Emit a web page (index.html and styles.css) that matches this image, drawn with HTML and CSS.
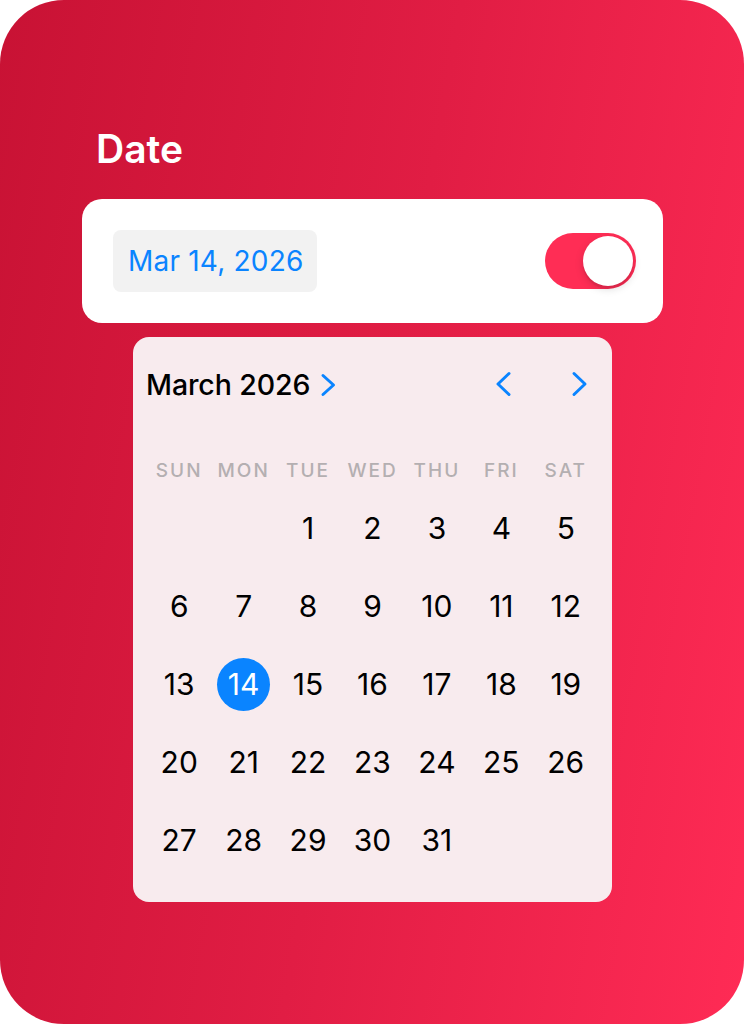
FILE: index.html
```html
<!DOCTYPE html>
<html lang="en">
<head>
<meta charset="utf-8">
<title>Date</title>
<link rel="stylesheet" href="styles.css">
</head>
<body>
<div class="frame">
  <h1 class="title">Date</h1>
  <div class="field">
    <div class="datebox">Mar 14, 2026</div>
    <div class="toggle"><div class="knob"></div></div>
  </div>
  <div class="calendar">
    <div class="cal-head">
      <div class="month">March 2026
        <svg class="chev-month" width="17" height="24" viewBox="0 0 17 24"><path d="M3 2.5 L13.5 12 L3 21.5" fill="none" stroke="#0a84ff" stroke-width="3" stroke-linecap="round" stroke-linejoin="round"/></svg>
      </div>
      <div class="nav">
        <svg class="chev" width="17" height="26" viewBox="0 0 17 26"><path d="M14 2.5 L3 13 L14 23.5" fill="none" stroke="#0a84ff" stroke-width="3" stroke-linecap="round" stroke-linejoin="round"/></svg>
        <svg class="chev" width="17" height="26" viewBox="0 0 17 26"><path d="M3 2.5 L14 13 L3 23.5" fill="none" stroke="#0a84ff" stroke-width="3" stroke-linecap="round" stroke-linejoin="round"/></svg>
      </div>
    </div>
    <div class="weekdays">
      <span>SUN</span><span>MON</span><span>TUE</span><span>WED</span><span>THU</span><span>FRI</span><span>SAT</span>
    </div>
    <div class="days">
      <span></span><span></span>
      <span>1</span><span>2</span><span>3</span><span>4</span><span>5</span>
      <span>6</span><span>7</span><span>8</span><span>9</span><span>10</span><span>11</span><span>12</span>
      <span>13</span><span class="sel"><b>14</b></span><span>15</span><span>16</span><span>17</span><span>18</span><span>19</span>
      <span>20</span><span>21</span><span>22</span><span>23</span><span>24</span><span>25</span><span>26</span>
      <span>27</span><span>28</span><span>29</span><span>30</span><span>31</span>
    </div>
  </div>
</div>
</body>
</html>
```

FILE: styles.css
```css
* { box-sizing: border-box; }
html, body { margin: 0; padding: 0; background: #ffffff; }
body { font-family: Inter, "Noto Sans", "Liberation Sans", sans-serif; }

.frame {
  width: 744px;
  height: 1024px;
  border-radius: 64px;
  background: linear-gradient(100deg, #c81234 0%, #e11d44 50%, #ff2b55 100%);
  padding: 126px 81px 0 82px;
}

.title {
  margin: 0 0 27px 14px;
  font-size: 39px;
  line-height: 46px;
  font-weight: 600;
  color: #ffffff;
}

.field {
  height: 124px;
  background: #ffffff;
  border-radius: 20px;
  display: flex;
  align-items: center;
  justify-content: space-between;
  padding: 0 27px 0 31px;
}

.datebox {
  width: 204px;
  height: 62px;
  background: #f2f2f2;
  border-radius: 8px;
  padding-left: 15px;
  display: flex;
  align-items: center;
  font-size: 28px;
  color: #0a84ff;
  letter-spacing: 0.2px;
}

.toggle {
  width: 91px;
  height: 56px;
  border-radius: 28px;
  background: #ff2d55;
  display: flex;
  align-items: center;
  justify-content: flex-end;
  padding-right: 3px;
}

.knob {
  width: 50px;
  height: 50px;
  border-radius: 50%;
  background: #ffffff;
  box-shadow: 0 3px 8px rgba(0, 0, 0, 0.15), 0 3px 1px rgba(0, 0, 0, 0.06);
}

.calendar {
  width: 479px;
  height: 565px;
  margin: 14px 0 0 51px;
  background: #f8ebee;
  border-radius: 16px;
  padding: 0 14px;
}

.cal-head {
  height: 94px;
  display: flex;
  align-items: center;
  justify-content: space-between;
  padding: 0 10px 0 0;
}

.month {
  display: flex;
  align-items: center;
  gap: 10px;
  margin-left: -1px;
  font-size: 28.5px;
  font-weight: 500;
  color: #000000;
  letter-spacing: -0.1px;
}

.chev-month { display: block; margin-top: 1px; }

.nav {
  display: flex;
  align-items: center;
  gap: 59px;
}

.chev { display: block; }

.weekdays {
  margin-top: 20px;
  height: 38px;
  display: grid;
  grid-template-columns: repeat(7, 1fr);
  align-items: center;
  text-align: center;
  font-size: 19px;
  font-weight: 500;
  letter-spacing: 2px;
  color: #b4afb1;
}

.days {
  display: grid;
  grid-template-columns: repeat(7, 1fr);
  grid-auto-rows: 78px;
  align-items: center;
  justify-items: center;
  font-size: 30px;
  color: #000000;
}

.days span {
  display: flex;
  align-items: center;
  justify-content: center;
}

.sel b {
  width: 53px;
  height: 53px;
  border-radius: 50%;
  background: #0a84ff;
  color: #ffffff;
  font-weight: 400;
  display: flex;
  align-items: center;
  justify-content: center;
}
```
